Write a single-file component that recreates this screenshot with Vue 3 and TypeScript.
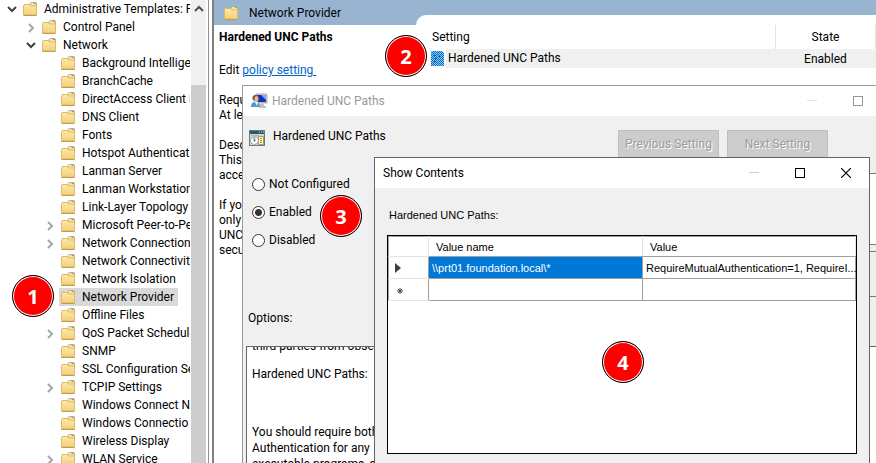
<script setup lang="ts">
import { ref } from 'vue'

interface TreeNode {
  label: string
  level: number
  state?: 'open' | 'closed'
}

const nodes: TreeNode[] = [
  { label: 'Administrative Templates: P', level: 0, state: 'open' },
  { label: 'Control Panel', level: 1, state: 'closed' },
  { label: 'Network', level: 1, state: 'open' },
  { label: 'Background Intellige', level: 2 },
  { label: 'BranchCache', level: 2 },
  { label: 'DirectAccess Client E', level: 2 },
  { label: 'DNS Client', level: 2 },
  { label: 'Fonts', level: 2 },
  { label: 'Hotspot Authenticat', level: 2 },
  { label: 'Lanman Server', level: 2 },
  { label: 'Lanman Workstation', level: 2 },
  { label: 'Link-Layer Topology', level: 2 },
  { label: 'Microsoft Peer-to-Pe', level: 2, state: 'closed' },
  { label: 'Network Connection', level: 2, state: 'closed' },
  { label: 'Network Connectivit', level: 2 },
  { label: 'Network Isolation', level: 2 },
  { label: 'Network Provider', level: 2 },
  { label: 'Offline Files', level: 2 },
  { label: 'QoS Packet Schedule', level: 2, state: 'closed' },
  { label: 'SNMP', level: 2 },
  { label: 'SSL Configuration Se', level: 2 },
  { label: 'TCPIP Settings', level: 2, state: 'closed' },
  { label: 'Windows Connect N', level: 2 },
  { label: 'Windows Connectio', level: 2 },
  { label: 'Wireless Display', level: 2 },
  { label: 'WLAN Service', level: 2, state: 'closed' },
]

const selected = ref('Network Provider')
const policyState = ref('Enabled')
const states = ['Not Configured', 'Enabled', 'Disabled']
</script>

<template>
  <div class="screen">
    <svg class="defs" aria-hidden="true">
      <defs>
        <linearGradient id="folderFill" x1="0" y1="0" x2="0" y2="1">
          <stop offset="0" stop-color="#fde9ac" />
          <stop offset="1" stop-color="#f2d07a" />
        </linearGradient>
        <symbol id="folder" viewBox="0 0 14 14">
          <path d="M7 3V1.500L8 .5h5l.5.5v4H7z" fill="#f6e0a0" stroke="#d0ac5e" />
          <path d="M9 1.500h1.500" stroke="#fff" />
          <path d="M10.500 1.500h2" stroke="#4f9fd8" />
          <path d="M.5 3.500 1 2.500h5.500l1 1.500h6v9H.5z" fill="url(#folderFill)" stroke="#dcb96c" />
          <path d="M.5 13.500h13" stroke="#c29a4c" />
        </symbol>
      </defs>
    </svg>

    <nav class="tree-pane">
      <ul class="tree">
        <li v-for="n in nodes" :key="n.label" :class="['node', 'level-' + n.level]">
          <button v-if="n.state" :class="['twisty', n.state]" type="button" :aria-label="n.label">
            <svg v-if="n.state === 'open'" width="10" height="10" viewBox="0 0 10 10"><path d="M1 3l4 4 4-4" fill="none" stroke="#404040" stroke-width="2" /></svg>
            <svg v-else width="10" height="10" viewBox="0 0 10 10"><path d="M3 1l4 4-4 4" fill="none" stroke="#a6a6a6" stroke-width="2" /></svg>
          </button>
          <span v-else class="twisty"></span>
          <button type="button" :class="['item', { selected: selected === n.label }]" @click="selected = n.label">
            <svg class="folder"><use href="#folder" /></svg>{{ n.label }}
          </button>
        </li>
      </ul>
      <div class="scrollbar">
        <button class="scroll-up" type="button" aria-label="Scroll up">
          <svg width="10" height="8" viewBox="0 0 10 8"><path d="M1 6l4-4 4 4" fill="none" stroke="#505050" stroke-width="2" /></svg>
        </button>
        <div class="thumb"></div>
      </div>
    </nav>

    <main class="details">
      <header class="banner"><svg class="folder"><use href="#folder" /></svg>Network Provider</header>
      <div class="columns">
        <section class="description">
          <h2>Hardened UNC Paths</h2>
          <p class="edit">Edit <a href="#">policy setting&nbsp;</a></p>
          <p>Requ<br />At le</p>
          <p>Desc<br />This<br />acce</p>
          <p>If yo<br />only<br />UNC<br />secu</p>
        </section>
        <section class="list">
          <table class="settings">
            <thead>
              <tr><th class="name">Setting</th><th class="state">State</th></tr>
            </thead>
            <tbody>
              <tr>
                <td class="name">
                  <div class="entry">
                    <svg width="13" height="15" viewBox="0 0 13 15">
                      <defs>
                        <pattern id="dither" width="2" height="2" patternUnits="userSpaceOnUse">
                          <rect width="2" height="2" fill="#8ec5ee" />
                          <rect width="1" height="1" fill="#0072ca" />
                          <rect x="1" y="1" width="1" height="1" fill="#0072ca" />
                        </pattern>
                      </defs>
                      <path d="M0 1l1-1h10l2 2v13H0z" fill="url(#dither)" />
                      <path d="M3 4h2v1H3zM4 7h2v1H4zM3 10h2v1H3zM8 5h1v1H8z" fill="#174f80" />
                    </svg>
                    <span>Hardened UNC Paths</span>
                  </div>
                </td>
                <td class="state">Enabled</td>
              </tr>
            </tbody>
          </table>
        </section>
      </div>
    </main>

    <section class="window policy" aria-label="Hardened UNC Paths">
      <header class="titlebar">
        <svg width="17" height="16" viewBox="0 0 17 16">
          <path d="M5 1h10l1 1v8H5z" fill="#d5d5cc" stroke="#a8a99f" />
          <path d="M6 2h9v7H6z" fill="#1432c0" />
          <path d="M10 2h5v5z" fill="#87a8f2" />
          <path d="M9 11h4v2h2v2H8v-2h1z" fill="#c4c4b8" />
          <path d="M0 14c0-4 2-5 4.500-5S9 10 9 14z" fill="#4a9bd0" />
          <circle cx="4.500" cy="5" r="3" fill="#765438" />
          <ellipse cx="5.500" cy="6" rx="2" ry="3" fill="#e5b98b" />
          <path d="M4 9l2 4 1-4z" fill="#fff" />
        </svg>
        <span class="caption">Hardened UNC Paths</span>
        <button type="button" aria-label="Minimize"><svg width="10" height="10"><path d="M0 4.500h10" stroke="#e3e3e3" /></svg></button>
        <button type="button" aria-label="Maximize"><svg width="10" height="10"><rect x=".5" y=".5" width="9" height="9" fill="none" stroke="#999" /></svg></button>
      </header>
      <div class="policy-head">
        <svg width="16" height="16" viewBox="0 0 16 16">
          <path d="M0 0h16v16H0z" fill="#657d82" />
          <path d="M1 4h14v11H1z" fill="#d9d7cc" />
          <path d="M1 1h14v3H1z" fill="#245b67" />
          <path d="M10 2h1M12 2h1M14 2h1" stroke="#d9e4e5" />
          <path d="M2 5.500h8" stroke="#b0b0a4" />
          <circle cx="5.500" cy="10.500" r="4" fill="#fff" stroke="#9da8a8" />
          <path d="M5.500 10.500L3 7.500a4 4 0 0 1 4 0z" fill="#83c8ba" />
          <circle cx="5.500" cy="10.500" r="1" fill="#555" />
          <path d="M9.500 6.500h5v8h-5z" fill="#fff7cb" stroke="#af9b59" />
          <path d="M11 8.500h2M11 10.500h2M11 12.500h2" stroke="#9b8a53" />
        </svg>
        <span class="policy-name">Hardened UNC Paths</span>
        <button type="button" disabled>Previous Setting</button>
        <button type="button" disabled>Next Setting</button>
      </div>
      <div class="policy-state">
        <div class="radios">
          <label v-for="s in states" :key="s"><input v-model="policyState" type="radio" name="state" :value="s" />{{ s }}</label>
        </div>
        <div class="side-boxes"><div class="comment"></div><div class="supported"></div></div>
      </div>
      <div class="options-label">Options:</div>
      <div class="options">
        <p class="clipped">third parties from obser</p>
        <p class="option-name">Hardened UNC Paths:</p>
        <p>You should require both<br />Authentication for any<br />executable programs, s</p>
      </div>
    </section>

    <section class="window contents" aria-label="Show Contents">
      <header class="titlebar">
        <span class="caption">Show Contents</span>
        <button type="button" aria-label="Minimize"><svg width="10" height="10"><path d="M0 4.500h10" stroke="#ccc" /></svg></button>
        <button type="button" aria-label="Maximize"><svg width="10" height="10"><rect x=".5" y=".5" width="9" height="9" fill="none" stroke="#000" /></svg></button>
        <button type="button" aria-label="Close"><svg width="10" height="10"><path d="M0 0l10 10M10 0L0 10" stroke="#000" stroke-width="1.200" /></svg></button>
      </header>
      <div class="contents-body">
        <div class="grid-label" id="gridLabel">Hardened UNC Paths:</div>
        <div class="grid">
          <table aria-labelledby="gridLabel">
            <thead>
              <tr><th class="rowhead"></th><th class="key">Value name</th><th>Value</th></tr>
            </thead>
            <tbody>
              <tr>
                <td class="rowhead"><svg width="20" height="10"><path d="M0 0l6 5-6 5z" fill="#404040" /></svg></td>
                <td class="key current">\\prt01.foundation.local\*</td>
                <td>RequireMutualAuthentication=1, RequireI...</td>
              </tr>
              <tr>
                <td class="rowhead"><svg width="20" height="10"><path d="M5 3v6M2 6h6M3 4l4 4M7 4l-4 4" stroke="#484848" /></svg></td>
                <td class="key"></td>
                <td></td>
              </tr>
            </tbody>
          </table>
        </div>
      </div>
    </section>

    <span class="badge one">1</span>
    <span class="badge two">2</span>
    <span class="badge three">3</span>
    <span class="badge four">4</span>
  </div>
</template>

<style>
body {
  margin: 0;
  overflow: hidden;
}
</style>

<style scoped>
.screen {
  position: relative;
  display: flex;
  height: 100vh;
  overflow: hidden;
  background: #fff;
  color: #000;
  font: 12px/16px Roboto, 'Open Sans', sans-serif;
}
.screen * {
  box-sizing: border-box;
}
.defs {
  position: absolute;
  width: 0;
  height: 0;
}
button {
  padding: 0;
  border: 0;
  background: none;
  color: inherit;
  font: inherit;
}
p,
h2,
ul {
  margin: 0;
  padding: 0;
}
.folder {
  width: 14px;
  height: 14px;
  flex: none;
}

/* console tree */
.tree-pane {
  display: flex;
  flex: none;
  width: 209px;
  border-right: 1px solid #909090;
}
.tree {
  flex: 1;
  min-width: 0;
  overflow: hidden;
  list-style: none;
}
.node {
  display: flex;
  height: 18px;
}
.level-0 {
  padding-left: 6px;
}
.level-1 {
  padding-left: 25px;
}
.level-2 {
  padding-left: 44px;
}
.twisty {
  display: flex;
  flex: none;
  align-items: center;
  width: 15px;
  padding-left: 1px;
}
.twisty.closed {
  padding-top: 2px;
}
.item {
  display: flex;
  align-items: center;
  gap: 7px;
  padding: 0 4px 0 2px;
  white-space: nowrap;
}
.item.selected {
  background: #d9d9d9;
}
.scrollbar {
  display: flex;
  flex-direction: column;
  flex: none;
  width: 15px;
  margin: 0 2px 0 1px;
  background: #f0f0f0;
}
.scroll-up {
  display: flex;
  justify-content: center;
  height: 85px;
  padding-top: 5px;
}
.thumb {
  flex: 1;
  background: #cdcdcd;
}

/* details pane */
.details {
  flex: 1;
  min-width: 0;
  margin-left: 3px;
  border-left: 2px solid #808080;
}
.banner {
  display: flex;
  align-items: center;
  gap: 11px;
  height: 25px;
  padding-left: 10px;
  background: #99b4d1;
}
.columns {
  display: flex;
}
.description {
  flex: none;
  width: 202px;
  padding: 5px 0 0 5px;
  line-height: 15px;
}
.description h2 {
  margin-bottom: 18px;
  font-size: 12px;
  line-height: 15px;
}
.description p {
  margin-bottom: 15px;
  white-space: nowrap;
}
.description a {
  color: #0066cc;
}
.list {
  flex: 1;
  margin-top: -10px;
  padding-top: 10px;
  border-top-left-radius: 10px;
  background: #fff;
}
.settings {
  width: 100%;
  border-collapse: collapse;
  table-layout: fixed;
}
.settings th {
  height: 24px;
  padding: 0;
  border-right: 1px solid #e3e3e3;
  font-weight: 400;
}
.settings td {
  height: 19px;
  padding: 0;
}
.settings th.name {
  padding-left: 16px;
  text-align: left;
}
.settings .state {
  width: 100px;
  text-align: center;
}
.settings td.state {
  background: #f0f0f0;
}
.entry {
  display: flex;
  align-items: center;
  gap: 2px;
  padding-left: 15px;
}
.entry span {
  flex: 1;
  padding-left: 2px;
  background: #f0f0f0;
  line-height: 19px;
}

/* windows */
.window {
  position: absolute;
  bottom: 0;
  display: flex;
  flex-direction: column;
  background: #f0f0f0;
}
.titlebar {
  display: flex;
  flex: none;
  align-items: center;
  height: 30px;
  background: #fff;
}
.caption {
  flex: 1;
}
.titlebar button {
  display: flex;
  align-items: center;
  justify-content: center;
  width: 46px;
  height: 30px;
}
.policy {
  top: 85px;
  left: 242px;
  right: -5px;
  border: solid #999;
  border-width: 1px 0 0 1px;
}
.policy .titlebar {
  padding-left: 8px;
  color: #999;
}
.policy .caption {
  padding-left: 4px;
}
.policy-head {
  display: flex;
  gap: 8px;
  padding: 14px 53px 0 6px;
}
.policy-name {
  flex: 1;
  line-height: 12px;
}
.policy-head button {
  width: 101px;
  height: 28px;
  border: 1px solid #bfbfbf;
  background: #ccc;
  color: #9c9c9c;
  text-shadow: 1px 1px 0 #fff;
}
.policy-state {
  display: flex;
  justify-content: space-between;
  height: 152px;
  padding-top: 15px;
}
.radios {
  display: flex;
  flex-direction: column;
  gap: 12px;
  padding: 3px 0 0 9px;
}
.radios label {
  display: flex;
  align-items: center;
  gap: 4px;
}
.radios input {
  appearance: none;
  width: 13px;
  height: 13px;
  margin: 0;
  border: 1px solid #333;
  border-radius: 50%;
  background: #fff;
}
.radios input:checked {
  background: radial-gradient(circle, #333 0 3px, #fff 4px);
}
.side-boxes {
  display: flex;
  flex-direction: column;
  gap: 6px;
  width: 300px;
}
.comment {
  height: 72px;
  border: 1px solid #7a7a7a;
  background: #fff;
}
.supported {
  height: 46px;
  border: 1px solid #7a7a7a;
}
.options-label {
  padding-left: 5px;
}
.options {
  flex: 1;
  min-height: 0;
  margin: 20px 0 0 3px;
  padding-left: 5px;
  overflow: hidden;
  border: solid #646464;
  border-width: 1px 0 0 1px;
  background: #fff;
  white-space: nowrap;
}
.clipped {
  margin-top: -9px;
}
.option-name {
  margin: 12px 0 42px;
}
.contents {
  top: 157px;
  left: 374px;
  right: 6px;
  border: solid #646464;
  border-width: 1px 1px 0;
}
.contents .titlebar {
  padding-left: 8px;
}
.contents-body {
  display: flex;
  flex: 1;
  flex-direction: column;
  padding: 19px 12px 9px;
  font: 11px/16px 'Liberation Sans', Arial, sans-serif;
}
.grid-label {
  padding: 0 0 12px 2px;
}
.grid {
  flex: 1;
  border: 1px solid #000;
  background: #fff;
}
.grid table {
  width: 100%;
  border-collapse: collapse;
  table-layout: fixed;
}
.grid th,
.grid td {
  height: 22px;
  padding: 0 0 0 3px;
  border: 1px solid #a0a0a0;
  font-weight: 400;
  text-align: left;
  white-space: nowrap;
}
.grid th {
  height: 20px;
  padding-left: 7px;
  border-right-color: #e3e3e3;
}
.grid .rowhead {
  width: 40px;
  padding-left: 6px;
  border-bottom-color: #e3e3e3;
}
.grid td.rowhead svg {
  display: block;
}
.grid .key {
  width: 214px;
}
.grid .current {
  background: #0078d7;
  color: #fff;
}

/* numbered callouts */
.badge {
  position: absolute;
  width: 42px;
  height: 42px;
  border: 1px solid #000;
  border-radius: 50%;
  background: #f00;
  box-shadow: inset 0 0 0 1px #fff;
  color: #fff;
  font: 700 20px/41px 'Open Sans', sans-serif;
  text-align: center;
}
.one {
  left: 12px;
  top: 275px;
}
.two {
  left: 385px;
  top: 35px;
}
.three {
  left: 320px;
  top: 195px;
}
.four {
  left: 602px;
  top: 341px;
}
</style>
